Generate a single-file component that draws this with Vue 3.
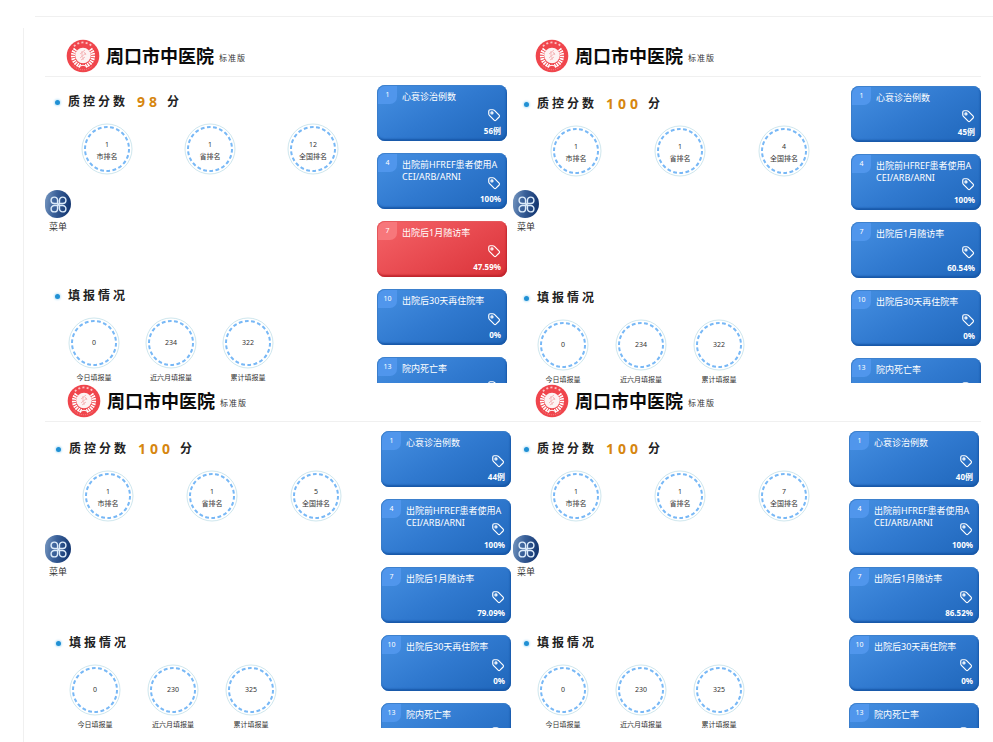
<!-- src/App.vue -->
<template>
  <main class="board">
    <section
      v-for="(panel, p) in panels"
      :key="p"
      class="panel"
      :class="panel.layout"
    >
      <header class="panel-header">
        <svg class="logo" viewBox="0 0 34 34" aria-hidden="true">
          <circle cx="17" cy="17" r="16.3" fill="#f0454c" />
          <path
            d="M8 8.500A12.500 12.500 0 0 1 26 8.500"
            transform="translate(0 -1.200)"
            fill="none"
            stroke="#fbc3c5"
            stroke-width="1.8"
            stroke-dasharray="2 2.2"
          />
          <path d="M7 26.500A13.800 13.800 0 0 0 27 26.500" fill="none" stroke="#f58a8e" stroke-width="1" stroke-dasharray="1 1" />
          <g fill="none" stroke="#fff">
            <path d="M14.500 27A10.500 10.500 0 0 1 10 9.500M19.500 27A10.500 10.500 0 0 0 24 9.500" stroke-width="4" stroke-dasharray="1.5 0.9" />
            <path d="M12 27.500q5-2.500 10 0" stroke-width="1" />
          </g>
          <circle cx="17" cy="16.500" r="7.800" fill="#fdf3f3" />
          <path
            d="M14 15l5-4M16 12v6M14 19l6-5M18 13l2 3M17 18v3M15 21l4-3"
            fill="none"
            stroke="#f3a9ac"
            stroke-width="0.800"
          />
        </svg>
        <h1>周口市中医院</h1>
        <span class="edition">标准版</span>
      </header>

      <div class="panel-body">
        <div class="stats">
          <h2 class="section-title">
            <span class="dot"></span>质控分数
            <strong class="score">{{ panel.score }}</strong>分
          </h2>
          <ul class="ranks">
            <li v-for="rank in panel.ranks" :key="rank.label" class="ring">
              <svg viewBox="0 0 52 52" aria-hidden="true">
                <circle class="ring-outer" cx="26" cy="26" r="25" />
                <circle class="ring-dash" cx="26" cy="26" r="22" pathLength="132" />
              </svg>
              <span>{{ rank.value }}</span>
              <span>{{ rank.label }}</span>
            </li>
          </ul>

          <h2 class="section-title">
            <span class="dot"></span>填报情况
          </h2>
          <ul class="reports">
            <li v-for="report in panel.reports" :key="report.label">
              <div class="ring">
                <svg viewBox="0 0 52 52" aria-hidden="true">
                  <circle class="ring-outer" cx="26" cy="26" r="25" />
                  <circle class="ring-dash" cx="26" cy="26" r="22" pathLength="132" />
                </svg>
                <span>{{ report.value }}</span>
              </div>
              <span class="report-label">{{ report.label }}</span>
            </li>
          </ul>
        </div>

        <ul class="cards">
          <li
            v-for="card in panel.cards"
            :key="card.no"
            class="card"
            :class="{ warn: card.warn }"
          >
            <span class="card-no">{{ card.no }}</span>
            <p class="card-name">{{ card.name }}</p>
            <div class="card-foot">
              <svg viewBox="0 0 24 24" aria-hidden="true">
                <path d="M3 9V5.500Q3 3 5.500 3H10q1.600 0 2.700 1.100l8.100 8.100q1.400 1.600 0 3.200l-5.400 5.400q-1.600 1.400-3.200 0L4.100 12.700Q3 11.600 3 10Z" />
                <circle cx="8.500" cy="8.500" r="1.800" />
              </svg>
              <strong>{{ card.value }}</strong>
            </div>
          </li>
        </ul>
      </div>

      <button type="button" class="menu">
        <span class="menu-icon">
          <svg viewBox="0 0 20 20" aria-hidden="true">
            <path d="M9 9H5.600A3.400 3.400 0 1 1 9 5.600ZM11 9V5.600A3.400 3.400 0 1 1 14.400 9ZM9 11V14.400A3.400 3.400 0 1 1 5.600 11ZM11 11h3.400A3.400 3.400 0 1 1 11 14.400Z" />
            <path d="M8.500 8.500l3 3M11.500 8.500l-3 3" />
          </svg>
        </span>
        <span>菜单</span>
      </button>
    </section>
  </main>
</template>

<script setup>
const cardNames = [
  [1, "心衰诊治例数"],
  [4, "出院前HFREF患者使用ACEI/ARB/ARNI"],
  [7, "出院后1月随访率"],
  [10, "出院后30天再住院率"],
  [13, "院内死亡率"],
];

function makePanel(layout, score, ranks, reports, values, warnNo) {
  return {
    layout,
    score,
    ranks: ["市排名", "省排名", "全国排名"].map((label, i) => ({
      label,
      value: ranks[i],
    })),
    reports: ["今日填报量", "近六月填报量", "累计填报量"].map((label, i) => ({
      label,
      value: reports[i],
    })),
    cards: cardNames.map(([no, name], i) => ({
      no,
      name,
      value: values[i],
      warn: no === warnNo,
    })),
  };
}

const panels = [
  makePanel("compact", 98, [1, 1, 12], [0, 234, 322], ["56例", "100%", "47.59%", "0%"], 7),
  makePanel("flush", 100, [1, 1, 4], [0, 234, 322], ["45例", "100%", "60.54%", "0%"]),
  makePanel("regular", 100, [1, 1, 5], [0, 230, 325], ["44例", "100%", "79.09%", "0%"]),
  makePanel("regular", 100, [1, 1, 7], [0, 230, 325], ["40例", "100%", "86.52%", "0%"]),
];
</script>

<style>
body {
  margin: 0;
  background: #fff;
}
</style>

<style scoped>
.board {
  display: grid;
  grid-template-columns: 1fr 1fr;
  margin: 16px 0 0 23px;
  padding: 22px 12px 15px 22px;
  background:
    linear-gradient(#f0f0f0, #f0f0f0) 12px 0 / 100% 1px no-repeat,
    linear-gradient(#f0f0f0, #f0f0f0) 0 12px / 1px 100% no-repeat;
  font-family: "Noto Sans", "Noto Sans CJK SC", sans-serif;
  color: #333;
}

h1,
h2,
p,
ul {
  margin: 0;
  padding: 0;
}

ul {
  list-style: none;
}

.panel {
  --indent: 1px;
  --ring-gap: 52px;
  --report-gap: 26px;
  --top-gap: 17px;
  --cards-top: 9px;
  --cards-right: 2px;
  position: relative;
  height: 345px;
  overflow: hidden;
}

.panel.compact {
  --indent: 0px;
  --ring-gap: 51px;
  --report-gap: 25px;
  --top-gap: 15px;
  --cards-top: 8px;
  --cards-right: 6px;
}

.panel.flush {
  --cards-right: 0px;
}

.panel-header {
  display: flex;
  align-items: center;
  box-sizing: border-box;
  height: 39px;
  padding: 0 0 2px calc(21px + var(--indent));
  border-bottom: 1px solid #f0f0f0;
}

.logo {
  width: 34px;
  height: 34px;
}

h1 {
  margin-left: 6px;
  font-size: 18px;
  line-height: 24px;
  font-weight: 700;
  color: #0a0a0a;
}

.edition {
  margin: 4px 0 0 5px;
  font-size: 8px;
  line-height: 12px;
  letter-spacing: 1px;
}

.panel-body {
  display: flex;
  justify-content: space-between;
}

.stats {
  padding: var(--top-gap) 0 0 var(--indent);
}

.section-title {
  display: flex;
  align-items: center;
  height: 20px;
  padding-left: 10px;
  font-size: 12px;
  line-height: 20px;
  letter-spacing: 3px;
  font-weight: 700;
  color: #222;
}

.dot {
  width: 5px;
  height: 5px;
  margin-right: 8px;
  border-radius: 50%;
  background: #2090d4;
  box-shadow: 0 0 2px 1px #c5e6f8;
}

.score {
  margin: 0 6px 0 9px;
  font-size: 14px;
  font-weight: 700;
  letter-spacing: 4px;
  color: #d6860f;
}

.ranks {
  display: flex;
  gap: var(--ring-gap);
  margin: 11px 0 111px;
  padding-left: 36px;
}

.ring {
  position: relative;
  display: flex;
  flex-direction: column;
  align-items: center;
  justify-content: center;
  box-sizing: border-box;
  width: 52px;
  height: 52px;
  font-size: 7px;
  line-height: 12px;
}

.ranks .ring {
  padding-top: 4px;
}

.ring svg {
  position: absolute;
  inset: 0;
  fill: none;
}

.ring-outer {
  stroke: #cfe7ee;
  stroke-width: 1;
}

.ring-dash {
  stroke: #78b8f6;
  stroke-width: 2;
  stroke-dasharray: 3.6 2.4;
}

.reports {
  display: flex;
  gap: var(--report-gap);
  margin-top: 11px;
  padding-left: 23px;
}

.reports li {
  display: flex;
  flex-direction: column;
  align-items: center;
  width: 52px;
}

.report-label {
  margin-top: 3px;
  font-size: 7px;
  line-height: 12px;
  white-space: nowrap;
}

.cards {
  display: flex;
  flex-direction: column;
  gap: 12px;
  width: 130px;
  margin: var(--cards-top) var(--cards-right) 0 0;
}

.card {
  position: relative;
  box-sizing: border-box;
  height: 56px;
  padding: 6px 6px 0 25px;
  border-radius: 8px;
  background: linear-gradient(150deg, #4690e2, #3079cf 50%, #1f66ba);
  box-shadow: inset -1px -2px 2px #1858a8, inset 1px 1px 1px #3d80cc;
  color: #fff;
}

.card.warn {
  background: linear-gradient(150deg, #f56468, #e84a50 50%, #d93238);
  box-shadow: inset -1px -2px 2px #c0252d, inset 1px 1px 1px #e55a5e;
}

.card-no {
  position: absolute;
  top: 1px;
  left: 1px;
  width: 19px;
  height: 18px;
  border-radius: 7px 0 7px 0;
  background: #5096ec;
  font-size: 7px;
  line-height: 18px;
  text-align: center;
}

.warn .card-no {
  background: #f7777b;
}

.card-name {
  font-size: 9px;
  line-height: 12px;
  word-break: break-all;
}

.card-foot {
  position: absolute;
  right: 6px;
  bottom: 4px;
  display: flex;
  flex-direction: column;
  align-items: flex-end;
  font-size: 8px;
  line-height: 12px;
}

.card-foot svg {
  width: 14px;
  height: 14px;
  margin-bottom: 3px;
  fill: none;
  stroke: #fff;
  stroke-width: 2;
}

.card-foot strong {
  min-height: 12px;
}

.menu {
  position: absolute;
  top: 152px;
  left: 0;
  display: flex;
  flex-direction: column;
  align-items: center;
  gap: 2px;
  padding: 0;
  border: 0;
  background: none;
  font-family: inherit;
  font-size: 9px;
  line-height: 14px;
  color: #333;
  cursor: pointer;
}

.menu-icon {
  display: flex;
  align-items: center;
  justify-content: center;
  width: 26px;
  height: 28px;
  border-radius: 12px 14px 14px 12px;
  background: linear-gradient(100deg, #7a9ac2, #3a619a 40%, #0b2d68);
}

.menu-icon svg {
  width: 19px;
  height: 19px;
  fill: none;
  stroke: #dcebfa;
  stroke-width: 1.5;
}
</style>
